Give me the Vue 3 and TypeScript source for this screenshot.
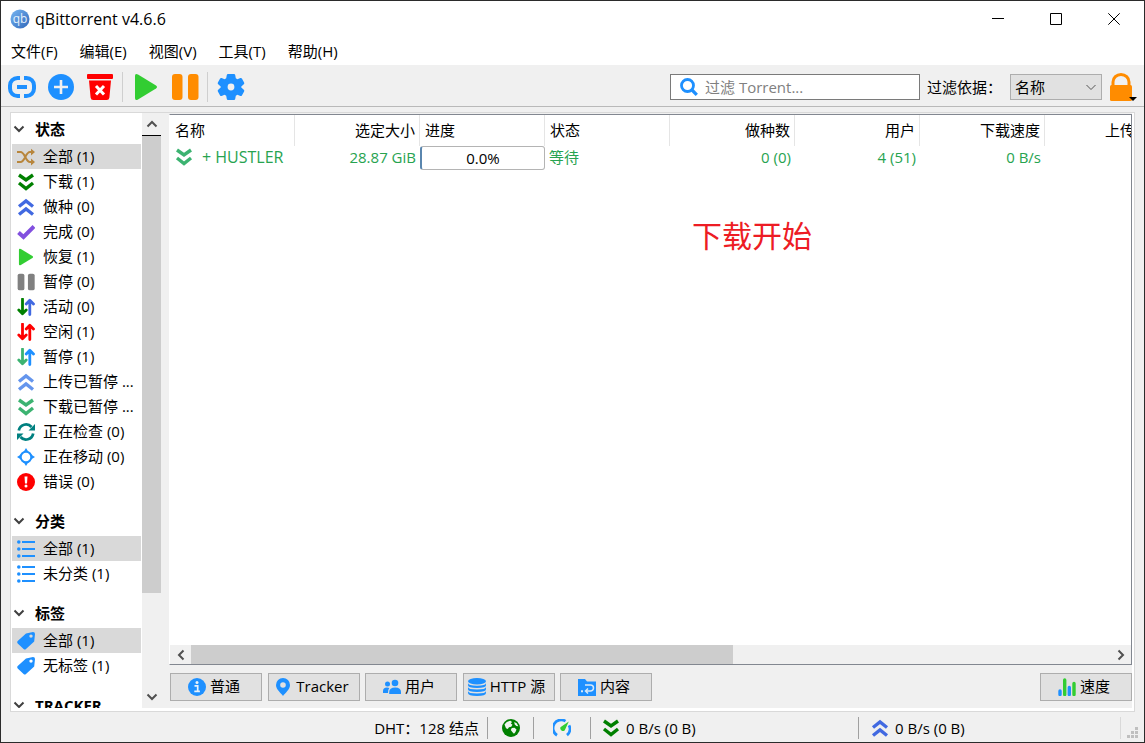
<script setup lang="ts">
import { ref } from 'vue'

interface FilterItem {
  icon: string
  tone: string
  label: string
  selected?: boolean
}

interface FilterSection {
  title: string
  items: FilterItem[]
}

interface Column {
  title: string
  numeric?: boolean
}

const menus: string[] = ['文件(F)', '编辑(E)', '视图(V)', '工具(T)', '帮助(H)']

const sections: FilterSection[] = [
  {
    title: '状态',
    items: [
      { icon: 'shuffle', tone: 'tan', label: '全部 (1)', selected: true },
      { icon: 'down', tone: 'green', label: '下载 (1)' },
      { icon: 'up', tone: 'royal', label: '做种 (0)' },
      { icon: 'check', tone: 'purple', label: '完成 (0)' },
      { icon: 'play', tone: 'lime', label: '恢复 (1)' },
      { icon: 'pause', tone: 'gray', label: '暂停 (0)' },
      { icon: 'updown', tone: 'active', label: '活动 (0)' },
      { icon: 'updown', tone: 'red', label: '空闲 (1)' },
      { icon: 'updown', tone: 'stalled', label: '暂停 (1)' },
      { icon: 'up', tone: 'cornflower', label: '上传已暂停 ...' },
      { icon: 'down', tone: 'sea', label: '下载已暂停 ...' },
      { icon: 'refresh', tone: 'teal', label: '正在检查 (0)' },
      { icon: 'target', tone: 'blue', label: '正在移动 (0)' },
      { icon: 'error', tone: 'red', label: '错误 (0)' },
    ],
  },
  {
    title: '分类',
    items: [
      { icon: 'list', tone: 'blue', label: '全部 (1)', selected: true },
      { icon: 'list', tone: 'blue', label: '未分类 (1)' },
    ],
  },
  {
    title: '标签',
    items: [
      { icon: 'tag', tone: 'blue', label: '全部 (1)', selected: true },
      { icon: 'tag', tone: 'blue', label: '无标签 (1)' },
    ],
  },
  { title: 'TRACKER', items: [] },
]

const columns: Column[] = [
  { title: '名称' },
  { title: '选定大小', numeric: true },
  { title: '进度' },
  { title: '状态' },
  { title: '做种数', numeric: true },
  { title: '用户', numeric: true },
  { title: '下载速度', numeric: true },
  { title: '上传速度', numeric: true },
]

const tabs = [
  { icon: 'info', label: '普通' },
  { icon: 'pin', label: 'Tracker' },
  { icon: 'people', label: '用户' },
  { icon: 'database', label: 'HTTP 源' },
  { icon: 'folder', label: '内容' },
]

const query = ref('')
const filterBy = ref('name')
</script>

<template>
  <svg class="sprite" aria-hidden="true">
    <defs>
      <linearGradient id="logo-fill" x1="0" y1="0" x2="1" y2="1">
        <stop offset="0" stop-color="#78b6f2" />
        <stop offset="1" stop-color="#2f67ba" />
      </linearGradient>
    </defs>
    <symbol id="i-link" viewBox="0 0 28 28">
      <path d="M12 5H9.500a7.500 7.500 0 0 0-7.500 7.500v3A7.500 7.500 0 0 0 9.500 23H12M16 5h2.500a7.500 7.500 0 0 1 7.500 7.500v3a7.500 7.500 0 0 1-7.500 7.500H16M9 14h10" fill="none" stroke="currentColor" stroke-width="4" />
    </symbol>
    <symbol id="i-add" viewBox="0 0 28 28">
      <circle cx="14" cy="14" r="13" fill="currentColor" />
      <path d="M14 7v14M7 14h14" stroke="#f0f0f0" stroke-width="2.600" />
    </symbol>
    <symbol id="i-trash" viewBox="0 0 28 28">
      <path d="M2 1h24q1 0 1 1v3q0 1-1 1H2q-1 0-1-1V2q0-1 1-1zM3 7.500h22l-1.600 17q-.3 2.500-2.600 2.500H7.200q-2.300 0-2.600-2.500z" fill="currentColor" />
      <path d="M10 13l8 8.500M18 13l-8 8.500" stroke="#fff" stroke-width="3" />
    </symbol>
    <symbol id="i-play" viewBox="0 0 28 28">
      <path d="M3 3q0-3 3-1.500L24 12.500q2 1.500 0 3L6 26.500Q3 28 3 25z" fill="currentColor" />
    </symbol>
    <symbol id="i-pause" viewBox="0 0 28 28">
      <rect x="1" y="1" width="10.500" height="26" rx="3" fill="currentColor" />
      <rect x="17" y="1" width="10.500" height="26" rx="3" fill="currentColor" />
    </symbol>
    <symbol id="i-gear" viewBox="0 0 28 28">
      <path fill-rule="evenodd" d="M11 1h6q1 0 1.200 1l.6 3.200 1.600 1 3-1.200q1-.3 1.500.6l2.200 4q.6 1-.3 1.700L24.300 13.400v1.200l2.500 2.100q.9.700.3 1.700l-2.200 4q-.5.900-1.500.6l-3-1.200-1.600 1-.6 3.200q-.2 1-1.200 1h-6q-1 0-1.200-1l-.6-3.200-1.600-1-3 1.200q-1 .3-1.500-.6l-2.200-4q-.6-1 .3-1.700l2.500-2.100v-1.200L1.200 11.300q-.9-.7-.3-1.700l2.200-4q.5-.9 1.500-.6l3 1.200 1.600-1L9.800 2Q10 1 11 1zM14 10.600a3.400 3.400 0 1 0 0 6.800 3.400 3.400 0 0 0 0-6.800z" fill="currentColor" />
    </symbol>
    <symbol id="i-search" viewBox="0 0 18 18">
      <circle cx="7.500" cy="7.500" r="6" fill="none" stroke="currentColor" stroke-width="2.800" />
      <path d="M12 12l4.800 4.800" stroke="currentColor" stroke-width="3.200" />
    </symbol>
    <symbol id="i-lock" viewBox="0 0 24 28">
      <path d="M4 14V9a8 7.500 0 0 1 16 0v5" fill="none" stroke="currentColor" stroke-width="3" />
      <rect x="1" y="12" width="22" height="16" rx="1.500" fill="currentColor" />
    </symbol>
    <symbol id="i-shuffle" viewBox="0 0 18 18">
      <path d="M0 4h3.500c4.500 0 5 10 9.500 10h3M0 14h3.500c4.500 0 5-10 9.500-10h3" fill="none" stroke="currentColor" stroke-width="2" />
      <path d="M14 .8L18 4l-4 3.400zM14 10.600l4 3.400-4 3.400z" fill="currentColor" />
    </symbol>
    <symbol id="i-down" viewBox="0 0 18 18">
      <path d="M2 2l7 5 7-5M2 10l7 5.500L16 10" fill="none" stroke="currentColor" stroke-width="3.400" />
    </symbol>
    <symbol id="i-up" viewBox="0 0 18 18">
      <path d="M2 8.500L9 3l7 5.500M2 16.500L9 11l7 5.500" fill="none" stroke="currentColor" stroke-width="3.400" />
    </symbol>
    <symbol id="i-check" viewBox="0 0 18 18">
      <path d="M1.500 9.500l5 4.500L17 3.500" fill="none" stroke="currentColor" stroke-width="4" />
    </symbol>
    <symbol id="i-updown" viewBox="0 0 18 18">
      <path d="M5.500 1v14M1.800 12l3.700 3.800L9.200 12" fill="none" stroke="currentColor" stroke-width="2.800" stroke-linecap="round" stroke-linejoin="round" />
      <path d="M12.800 16.500V3M9.200 6l3.600-3.800L16.500 6" fill="none" stroke="var(--alt, currentColor)" stroke-width="2.800" stroke-linecap="round" stroke-linejoin="round" />
    </symbol>
    <symbol id="i-refresh" viewBox="0 0 18 18">
      <path d="M1.800 7.500A7.300 7.300 0 0 1 14.500 4M16.200 10.500A7.300 7.300 0 0 1 3.500 14" fill="none" stroke="currentColor" stroke-width="2.800" />
      <path d="M18 1v6.500h-6.500zM0 17v-6.500h6.500z" fill="currentColor" />
    </symbol>
    <symbol id="i-target" viewBox="0 0 18 18">
      <circle cx="9" cy="9" r="5.300" fill="none" stroke="currentColor" stroke-width="2" />
      <path d="M9 0l2.500 4h-5zM9 18l2.500-4h-5zM0 9l4-2.500v5zM18 9l-4-2.500v5z" fill="currentColor" />
    </symbol>
    <symbol id="i-error" viewBox="0 0 18 18">
      <circle cx="9" cy="9" r="9" fill="currentColor" />
      <path d="M7.500 3.500h3L10 10.500H8z" fill="#fff" />
      <circle cx="9" cy="13" r="1.500" fill="#fff" />
    </symbol>
    <symbol id="i-list" viewBox="0 0 18 18">
      <path d="M5 2h13M5 9h13M5 16h13" stroke="currentColor" stroke-width="2" />
      <circle cx="1.800" cy="2" r="1.800" fill="currentColor" />
      <circle cx="1.800" cy="9" r="1.800" fill="currentColor" />
      <circle cx="1.800" cy="16" r="1.800" fill="currentColor" />
    </symbol>
    <symbol id="i-tag" viewBox="0 0 18 18">
      <path fill-rule="evenodd" d="M9 1.500L16 0q2 0 2 2l-.8 7.500L9 17q-1.200 1-2.400 0L.7 11.500q-1-1.200 0-2.400zM14 2.400a1.700 1.700 0 1 0 0 3.400 1.700 1.700 0 0 0 0-3.400z" fill="currentColor" />
    </symbol>
    <symbol id="i-info" viewBox="0 0 18 18">
      <circle cx="9" cy="9" r="9" fill="currentColor" />
      <circle cx="9" cy="4.500" r="1.500" fill="#e8f2fb" />
      <path d="M6.500 7.800h3.200v5M6.300 13.300h5.600" fill="none" stroke="#e8f2fb" stroke-width="1.700" />
    </symbol>
    <symbol id="i-pin" viewBox="0 0 18 18">
      <path fill-rule="evenodd" d="M9 0a7 7 0 0 1 7 7c0 4.500-5 8-7 11-2-3-7-6.500-7-11a7 7 0 0 1 7-7zM9 4.200a2.800 2.800 0 1 0 0 5.600 2.800 2.800 0 0 0 0-5.600z" fill="currentColor" />
    </symbol>
    <symbol id="i-people" viewBox="0 0 18 18">
      <circle cx="4.500" cy="6" r="2.500" fill="currentColor" />
      <circle cx="12" cy="5" r="3.300" fill="currentColor" />
      <path d="M0 15v-2q0-3.500 4-3.500 1.500 0 2.300.5Q5 11.500 5 15zM6.200 16v-2q0-4.500 6-4.500 5.800 0 5.800 4.500v2z" fill="currentColor" />
    </symbol>
    <symbol id="i-database" viewBox="0 0 18 18">
      <ellipse cx="9" cy="3.200" rx="9" ry="3.200" fill="currentColor" />
      <path d="M0 5q0 2.800 9 2.800T18 5v2.300q0 2.700-9 2.700T0 7.300zM0 9q0 2.500 9 2.500T18 9v2.300q0 2.700-9 2.700T0 11.300zM0 13q0 2.500 9 2.500t9-2.500v2q0 3-9 3T0 15z" fill="currentColor" />
    </symbol>
    <symbol id="i-folder" viewBox="0 0 18 18">
      <path d="M0 1h7l2 2.500h9V18H0z" fill="currentColor" />
      <path d="M7 7h5.500a2.800 2.800 0 0 1 0 6H8M10 10.500L7.500 13l2.500 2.500" fill="none" stroke="#d9e9f8" stroke-width="1.500" />
      <path d="M3 12.200h2v2H3z" fill="#d9e9f8" />
    </symbol>
    <symbol id="i-bars" viewBox="0 0 18 18">
      <path d="M2 13v3.500M11.300 9.500v7" stroke="#1e90ff" stroke-width="3.400" stroke-linecap="round" />
      <path d="M6.700 2v14.500M16 5.500v11" stroke="#32cd32" stroke-width="3.400" stroke-linecap="round" />
    </symbol>
    <symbol id="i-globe" viewBox="0 0 18 18">
      <circle cx="9" cy="9" r="9" fill="currentColor" />
      <path d="M2.500 5.500Q4.500 2 8.500 1.700L10 3 8.800 4.500l1.700 1.200-1.300 2L7 8.200 5.700 10 4 9.200zM9.800 9l2.700-.2 2 1.700q-.6 2.300-2.500 4.300l-1.500-1.500-1.700-2.200zM12.200 3l2.500 1.300 1.600 3-1.900-.3-1.700-1.500z" fill="#edf5ed" />
    </symbol>
    <symbol id="i-gauge" viewBox="0 0 18 18">
      <path d="M4 16.200A8 8 0 0 1 12.500 2.100M16 6.300a8 8 0 0 1-2 9.900" fill="none" stroke="#1e90ff" stroke-width="2.800" />
      <path d="M15.800 2.500L11.800 11.200a2.700 2.700 0 0 1-4.400-2.900z" fill="#32cd32" />
    </symbol>
    <symbol id="i-chevron" viewBox="0 0 12 12">
      <path d="M1.500 3.500L6 8l4.500-4.500" fill="none" stroke="currentColor" stroke-width="2" />
    </symbol>
  </svg>

  <div class="window">
    <header class="titlebar">
      <svg class="logo" viewBox="0 0 20 20" aria-hidden="true">
        <circle cx="10" cy="10" r="9.500" fill="url(#logo-fill)" />
        <text x="10" y="13.500" text-anchor="middle">qb</text>
      </svg>
      <h1>qBittorrent v4.6.6</h1>
      <div class="window-controls">
        <button type="button" aria-label="最小化">
          <svg viewBox="0 0 12 12"><path d="M0 5.500h12" /></svg>
        </button>
        <button type="button" aria-label="最大化">
          <svg viewBox="0 0 12 12"><path d="M.5.5h11v11H.5z" /></svg>
        </button>
        <button type="button" aria-label="关闭">
          <svg viewBox="0 0 12 12"><path d="M.3.300l11.400 11.400M11.700.300L.3 11.700" /></svg>
        </button>
      </div>
    </header>

    <nav class="menubar">
      <button v-for="menu in menus" :key="menu" type="button">{{ menu }}</button>
    </nav>

    <div class="toolbar">
      <button type="button" class="tool blue" aria-label="添加链接"><svg><use href="#i-link" /></svg></button>
      <button type="button" class="tool blue" aria-label="添加文件"><svg><use href="#i-add" /></svg></button>
      <button type="button" class="tool red" aria-label="删除"><svg><use href="#i-trash" /></svg></button>
      <span class="divider"></span>
      <button type="button" class="tool lime" aria-label="恢复"><svg><use href="#i-play" /></svg></button>
      <button type="button" class="tool orange" aria-label="暂停"><svg><use href="#i-pause" /></svg></button>
      <span class="divider"></span>
      <button type="button" class="tool blue" aria-label="选项"><svg><use href="#i-gear" /></svg></button>

      <div class="filter">
        <div class="search">
          <svg class="blue" aria-hidden="true"><use href="#i-search" /></svg>
          <input v-model="query" type="text" placeholder="过滤 Torrent..." aria-label="过滤 Torrent" />
        </div>
        <label for="filter-by">过滤依据：</label>
        <div class="select">
          <select id="filter-by" v-model="filterBy">
            <option value="name">名称</option>
          </select>
          <svg aria-hidden="true" viewBox="0 0 12 12"><path d="M1.500 4L6 8.500 10.500 4" /></svg>
        </div>
        <button type="button" class="lock orange" aria-label="锁定">
          <svg><use href="#i-lock" /></svg>
        </button>
      </div>
    </div>

    <main class="workspace">
      <aside class="sidebar">
        <div class="filters">
          <section v-for="section in sections" :key="section.title">
            <h2>
              <svg aria-hidden="true"><use href="#i-chevron" /></svg>
              {{ section.title }}
            </h2>
            <ul>
              <li v-for="item in section.items" :key="item.label + item.icon + item.tone" :class="{ selected: item.selected }">
                <svg :class="item.tone" aria-hidden="true"><use :href="'#i-' + item.icon" /></svg>
                <span class="text">{{ item.label }}</span>
              </li>
            </ul>
          </section>
        </div>
        <div class="vscroll" aria-hidden="true">
          <span class="arrow arrow-up"><svg><use href="#i-chevron" /></svg></span>
          <span class="track"><span class="thumb"></span></span>
          <span class="arrow arrow-down"><svg><use href="#i-chevron" /></svg></span>
        </div>
      </aside>

      <div class="content">
        <div class="transfers">
          <div class="viewport">
            <table>
              <thead>
                <tr>
                  <th v-for="column in columns" :key="column.title" scope="col" :class="{ numeric: column.numeric }">
                    {{ column.title }}
                  </th>
                </tr>
              </thead>
              <tbody>
                <tr>
                  <td>
                    <div class="name">
                      <svg class="sea" aria-hidden="true"><use href="#i-down" /></svg>
                      <span>+ HUSTLER</span>
                    </div>
                  </td>
                  <td class="numeric">28.87 GiB</td>
                  <td class="progress-cell"><div class="progress">0.0%</div></td>
                  <td>等待</td>
                  <td class="numeric">0 (0)</td>
                  <td class="numeric">4 (51)</td>
                  <td class="numeric">0 B/s</td>
                  <td class="numeric">0 B/s</td>
                </tr>
              </tbody>
            </table>
            <p class="note">下载开始</p>
          </div>
          <div class="hscroll" aria-hidden="true">
            <span class="arrow arrow-left"><svg><use href="#i-chevron" /></svg></span>
            <span class="track"><span class="thumb"></span></span>
            <span class="arrow arrow-right"><svg><use href="#i-chevron" /></svg></span>
          </div>
        </div>

        <div class="tabs">
          <div class="tab-group">
            <button v-for="tab in tabs" :key="tab.label" type="button">
              <svg class="blue" aria-hidden="true"><use :href="'#i-' + tab.icon" /></svg>
              <span class="text">{{ tab.label }}</span>
            </button>
          </div>
          <button type="button">
            <svg aria-hidden="true"><use href="#i-bars" /></svg>
            <span class="text">速度</span>
          </button>
        </div>
      </div>
    </main>

    <footer class="statusbar">
      <div class="cell dht">DHT：128 结点</div>
      <div class="cell connection"><svg class="green" aria-hidden="true"><use href="#i-globe" /></svg></div>
      <div class="cell limits"><svg aria-hidden="true"><use href="#i-gauge" /></svg></div>
      <div class="cell rate"><svg class="green" aria-hidden="true"><use href="#i-down" /></svg>0 B/s (0 B)</div>
      <div class="cell rate last"><svg class="royal" aria-hidden="true"><use href="#i-up" /></svg>0 B/s (0 B)</div>
      <div class="grip">
        <svg viewBox="0 0 12 12" aria-hidden="true">
          <path d="M8 0h3v3H8zM8 4h3v3H8zM4 4h3v3H4zM8 8h3v3H8zM4 8h3v3H4zM0 8h3v3H0z" fill="#bfbfbf" />
        </svg>
      </div>
    </footer>
  </div>
</template>

<style>
body {
  background: #2b2b2b;
}
</style>

<style scoped>
.sprite {
  position: absolute;
  width: 0;
  height: 0;
}

.window {
  box-sizing: border-box;
  display: flex;
  flex-direction: column;
  height: 100vh;
  border: 1px solid #2b2b2b;
  background: #f0f0f0;
  color: #000;
  font-family: 'Open Sans', 'Noto Sans CJK SC', sans-serif;
  font-size: 15px;
  line-height: 24px;
  overflow: hidden;
}

button,
input,
select {
  margin: 0;
  padding: 0;
  border: 0;
  background: none;
  color: inherit;
  font: inherit;
}

svg {
  display: block;
  flex: none;
}

.tan { color: #b8863c; }
.green { color: #008000; }
.royal { color: #4169e1; }
.purple { color: #8250df; }
.lime { color: #32cd32; }
.gray { color: #808080; }
.red { color: #ff0000; }
.cornflower { color: #6495ed; }
.sea { color: #3cb371; }
.teal { color: #008080; }
.blue { color: #1e90ff; }
.orange { color: #ff8c00; }
.active { color: #008000; --alt: #4169e1; }
.stalled { color: #3cb371; --alt: #1e90ff; }

.text {
  padding-bottom: 2px;
}

.titlebar {
  box-sizing: border-box;
  display: flex;
  align-items: center;
  height: 37px;
  padding: 0 1px 1px 9px;
  background: #fff;
}

.logo {
  width: 20px;
  height: 20px;
}

.logo text {
  fill: #e4f0fc;
  font-size: 12px;
}

h1 {
  margin: 0 0 0 5px;
  font-size: 16px;
  font-weight: 400;
}

.window-controls {
  display: flex;
  margin-left: auto;
}

.window-controls button {
  display: grid;
  place-items: center;
  width: 58px;
  height: 36px;
}

.window-controls svg {
  width: 12px;
  height: 12px;
  fill: none;
  stroke: #000;
}

.menubar {
  box-sizing: border-box;
  display: flex;
  align-items: center;
  gap: 22px;
  height: 27px;
  padding: 0 10px 2px;
  background: #fff;
}

.toolbar {
  box-sizing: border-box;
  display: flex;
  align-items: center;
  height: 42px;
  padding: 2px 11px 0 7px;
  border-bottom: 1px solid #b9b9b9;
}

.tool {
  margin-right: 11px;
}

.tool svg {
  width: 28px;
  height: 28px;
}

.divider {
  width: 1px;
  height: 30px;
  margin-left: -3px;
  margin-right: 9px;
  background: #cfcfcf;
}

.filter {
  display: flex;
  align-items: center;
  margin-left: auto;
}

.search {
  box-sizing: border-box;
  display: flex;
  align-items: center;
  gap: 7px;
  width: 250px;
  height: 26px;
  padding-left: 9px;
  border: 1px solid #7a7a7a;
  background: #fff;
}

.search svg {
  width: 18px;
  height: 18px;
}

.search input {
  flex: 1;
  min-width: 0;
  height: 24px;
  outline: none;
}

.search input::placeholder {
  color: #808080;
  opacity: 1;
}

.filter label {
  width: 83px;
  margin-left: 7px;
  white-space: nowrap;
}

.select {
  position: relative;
}

.select select {
  box-sizing: border-box;
  width: 92px;
  height: 26px;
  padding: 0 4px;
  border: 1px solid #adadad;
  background: #e1e1e1;
  appearance: none;
}

.select svg {
  position: absolute;
  top: 7px;
  right: 5px;
  width: 12px;
  height: 12px;
  fill: none;
  stroke: #555;
  pointer-events: none;
}

.lock {
  position: relative;
  margin-left: 7px;
}

.lock svg {
  width: 24px;
  height: 28px;
}

.lock::after {
  content: '';
  position: absolute;
  right: -4px;
  bottom: 0;
  border: 4px solid transparent;
  border-top-color: #000;
  border-bottom: 0;
}

.workspace {
  display: flex;
  flex: 1;
  min-height: 0;
  gap: 8px;
  margin: 5px 9px 0;
  padding: 0 2px 3px 0;
  border: 1px solid #d9d9d9;
  background: linear-gradient(#f0f0f0, #f0f0f0) content-box, #fff;
}

.sidebar {
  display: flex;
  flex: none;
  width: 150px;
  background: #fff;
}

.filters {
  flex: 1;
  min-width: 0;
  padding: 1px 1px 0;
  overflow: hidden;
}

.filters section {
  margin-bottom: 12px;
}

h2 {
  display: flex;
  align-items: center;
  gap: 10px;
  height: 30px;
  margin: 0;
  padding-left: 1px;
  font-size: 15px;
  font-weight: 700;
}

h2 svg {
  width: 12px;
  height: 12px;
  color: #404040;
}

ul {
  margin: 0;
  padding: 0;
  list-style: none;
}

li {
  display: flex;
  align-items: center;
  gap: 8px;
  height: 25px;
  padding-left: 5px;
  white-space: nowrap;
}

li.selected {
  background: #d9d9d9;
}

li svg,
.name svg,
.tabs svg,
.cell svg {
  width: 18px;
  height: 18px;
}

.vscroll,
.hscroll {
  display: flex;
  flex: none;
  background: #f0f0f0;
}

.vscroll {
  flex-direction: column;
  width: 19px;
}

.track {
  display: flex;
  flex: 1;
}

.vscroll .track {
  flex-direction: column;
}

.thumb {
  background: #cdcdcd;
}

.vscroll .thumb {
  height: 83%;
}

.hscroll .thumb {
  width: 59%;
}

.arrow {
  display: grid;
  place-items: center;
  width: 19px;
  height: 22px;
  color: #505050;
}

.arrow svg {
  width: 12px;
  height: 12px;
}

.arrow-up {
  border-bottom: 1px solid #000;
}

.arrow-up svg {
  transform: rotate(180deg);
}

.arrow-left svg {
  transform: rotate(90deg);
}

.arrow-right svg {
  transform: rotate(-90deg);
}

.content {
  display: flex;
  flex: 1;
  flex-direction: column;
  min-width: 0;
}

.transfers {
  display: flex;
  flex: 1;
  flex-direction: column;
  min-height: 0;
  margin-top: 1px;
  border: 1px solid #828790;
  border-left-color: #fff;
  background: #fff;
}

.viewport {
  position: relative;
  flex: 1;
  min-height: 0;
  overflow: hidden;
}

table {
  width: 1000px;
  table-layout: fixed;
  border-collapse: separate;
  border-spacing: 0;
}

th {
  height: 29px;
  padding: 0 4px 2px 5px;
  border-right: 1px solid #e5e5e5;
  font-weight: 400;
  text-align: left;
}

td {
  height: 22px;
  padding: 0 4px 2px;
  color: #27a350;
  line-height: 22px;
}

th.numeric,
td.numeric {
  text-align: right;
}

.name {
  display: flex;
  align-items: center;
  gap: 9px;
  padding-left: 1px;
  font-size: 16px;
  white-space: nowrap;
}

td.progress-cell {
  padding: 0;
}

.progress {
  box-sizing: border-box;
  height: 24px;
  border: 1px solid #b4b4b4;
  border-left: 2px solid #5a86ae;
  border-radius: 3px;
  color: #000;
  text-align: center;
}

.note {
  position: absolute;
  top: 101px;
  left: 522px;
  margin: 0;
  color: #ed1c24;
  font-size: 30px;
  line-height: 40px;
}

.hscroll {
  height: 19px;
}

.hscroll .arrow {
  width: 21px;
  height: 19px;
}

.tabs {
  display: flex;
  justify-content: space-between;
  padding: 8px 0 7px 1px;
}

.tab-group {
  display: flex;
  justify-content: space-between;
  width: 482px;
}

.tabs button {
  box-sizing: border-box;
  display: flex;
  align-items: center;
  justify-content: center;
  gap: 4px;
  width: 92px;
  height: 28px;
  padding-right: 4px;
  border: 1px solid #adadad;
  background: #e1e1e1;
  white-space: nowrap;
}

.statusbar {
  display: flex;
  height: 30px;
  padding: 5px 0 3px;
  box-sizing: border-box;
}

.cell {
  box-sizing: border-box;
  display: flex;
  align-items: center;
  border-right: 1px solid #a0a0a0;
  white-space: nowrap;
}

.dht {
  flex: 1;
  justify-content: flex-end;
  padding-right: 8px;
}

.connection {
  justify-content: center;
  width: 46px;
}

.limits {
  justify-content: center;
  width: 57px;
}

.rate {
  gap: 6px;
  width: 268px;
  padding-left: 11px;
}

.rate.last {
  width: 262px;
  padding-left: 12px;
  border-right-color: #d9d9d9;
}

.grip {
  display: flex;
  align-items: flex-end;
  justify-content: center;
  width: 23px;
}

.grip svg {
  width: 12px;
  height: 12px;
}
</style>
